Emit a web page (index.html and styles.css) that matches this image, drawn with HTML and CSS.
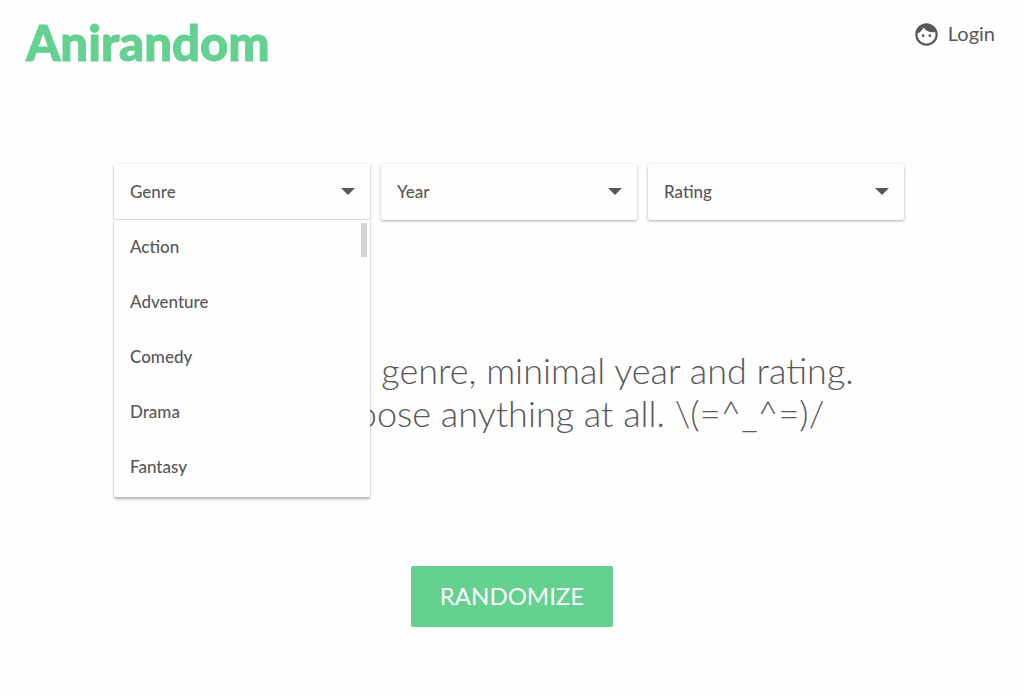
FILE: index.html
```html
<!DOCTYPE html>
<html lang="en">
<head>
<meta charset="utf-8">
<meta name="viewport" content="width=device-width, initial-scale=1">
<title>Anirandom</title>
<link rel="stylesheet" href="styles.css">
</head>
<body>
<header class="header">
  <h1 class="logo">Anirandom</h1>
  <a class="login" href="#login">
    <svg class="login-icon" viewBox="0 0 24 24" aria-hidden="true"><path d="M9 11.750a1.250 1.250 0 1 0 0 2.500 1.250 1.250 0 0 0 0-2.500zm6 0a1.250 1.250 0 1 0 0 2.500 1.250 1.250 0 0 0 0-2.500zM12 2C6.480 2 2 6.480 2 12s4.480 10 10 10 10-4.480 10-10S17.520 2 12 2zm0 18c-4.410 0-8-3.590-8-8 0-.29.020-.58.050-.86 2.360-1.050 4.230-2.980 5.210-5.370C11.070 8.330 14.050 10 17.420 10c.78 0 1.530-.09 2.250-.26.210.71.330 1.470.330 2.260 0 4.410-3.590 8-8 8z"/></svg>
    <span>Login</span>
  </a>
</header>
<main class="main">
  <form class="filters">
    <div class="filter">
      <button class="control control-open" type="button" aria-haspopup="listbox" aria-expanded="true" aria-controls="genres">Genre</button>
      <svg class="arrow" viewBox="0 0 14 7" aria-hidden="true"><path d="M0 0h14L7 7z"/></svg>
      <div class="menu">
        <ul class="options" id="genres" role="listbox" aria-label="Genre">
          <li class="option" role="option">Action</li>
          <li class="option" role="option">Adventure</li>
          <li class="option" role="option">Comedy</li>
          <li class="option" role="option">Drama</li>
          <li class="option" role="option">Fantasy</li>
        </ul>
        <span class="thumb"></span>
      </div>
    </div>
    <div class="filter">
      <select class="control" aria-label="Year"><option>Year</option></select>
      <svg class="arrow" viewBox="0 0 14 7" aria-hidden="true"><path d="M0 0h14L7 7z"/></svg>
    </div>
    <div class="filter">
      <select class="control" aria-label="Rating"><option>Rating</option></select>
      <svg class="arrow" viewBox="0 0 14 7" aria-hidden="true"><path d="M0 0h14L7 7z"/></svg>
    </div>
  </form>
  <p class="hint">Choose from genre, minimal year and rating.<br>Or else choose anything at all. \(=^_^=)/</p>
  <button class="randomize" type="button">RANDOMIZE</button>
</main>
</body>
</html>
```
FILE: styles.css
```css
* {
  box-sizing: border-box;
}

body {
  margin: 0;
  background: #fefefe;
  color: #585858;
  font-family: Lato, sans-serif;
}

.header {
  display: flex;
  justify-content: space-between;
  align-items: flex-start;
  padding: 14px 29px 0 26px;
}

.logo {
  margin: 0;
  color: #64d191;
  font-size: 49px;
  font-weight: 900;
  line-height: 57px;
  -webkit-text-stroke: 1px #64d191;
}

.login {
  display: flex;
  align-items: flex-start;
  gap: 8px;
  padding-top: 6px;
  color: inherit;
  font-size: 20px;
  line-height: 27px;
  text-decoration: none;
}

.login-icon {
  width: 27px;
  height: 29px;
  fill: currentColor;
}

.main {
  display: flex;
  flex-direction: column;
  align-items: center;
  padding: 93px 0 70px;
}

.filters {
  display: grid;
  grid-template-columns: repeat(3, 1fr);
  gap: 11px;
  width: 100%;
  max-width: 790px;
  margin-right: 6px;
}

.filter {
  position: relative;
  display: grid;
  align-items: center;
  border-radius: 2px;
  background: #fefefe;
  box-shadow: 0 1px 3px rgba(0, 0, 0, 0.32);
}

.control {
  grid-area: 1 / 1;
  width: 100%;
  height: 56px;
  padding: 0 16px 2px;
  appearance: none;
  border: 0;
  border-radius: 2px;
  background: transparent;
  color: inherit;
  font-family: inherit;
  font-size: 17px;
  font-weight: 500;
  text-align: left;
}

.control-open {
  padding-bottom: 0;
  border-bottom: 1px solid #dcdcdc;
}

.arrow {
  grid-area: 1 / 1;
  justify-self: end;
  width: 14px;
  height: 7px;
  margin: 0 15px 2px 0;
  fill: currentColor;
  pointer-events: none;
}

.menu {
  position: absolute;
  top: 100%;
  left: 0;
  width: 100%;
  border-radius: 0 0 2px 2px;
  background: #fefefe;
  box-shadow: 0 2px 3px rgba(0, 0, 0, 0.32);
}

.options {
  margin: 0;
  padding: 0 0 2px;
  list-style: none;
}

.option {
  padding: 0 16px 1px;
  font-size: 17px;
  font-weight: 500;
  line-height: 54px;
}

.thumb {
  position: absolute;
  top: 3px;
  right: 3px;
  width: 6px;
  height: 34px;
  background: #d4d4d4;
}

.hint {
  margin: 129px 0 131px;
  font-size: 36px;
  font-weight: 300;
  line-height: 43px;
  text-align: center;
}

.randomize {
  padding: 15px 29px 17px;
  border: 0;
  border-radius: 2px;
  background: #64d191;
  color: #fefefe;
  font-family: inherit;
  font-size: 24px;
  line-height: 29px;
}
```
